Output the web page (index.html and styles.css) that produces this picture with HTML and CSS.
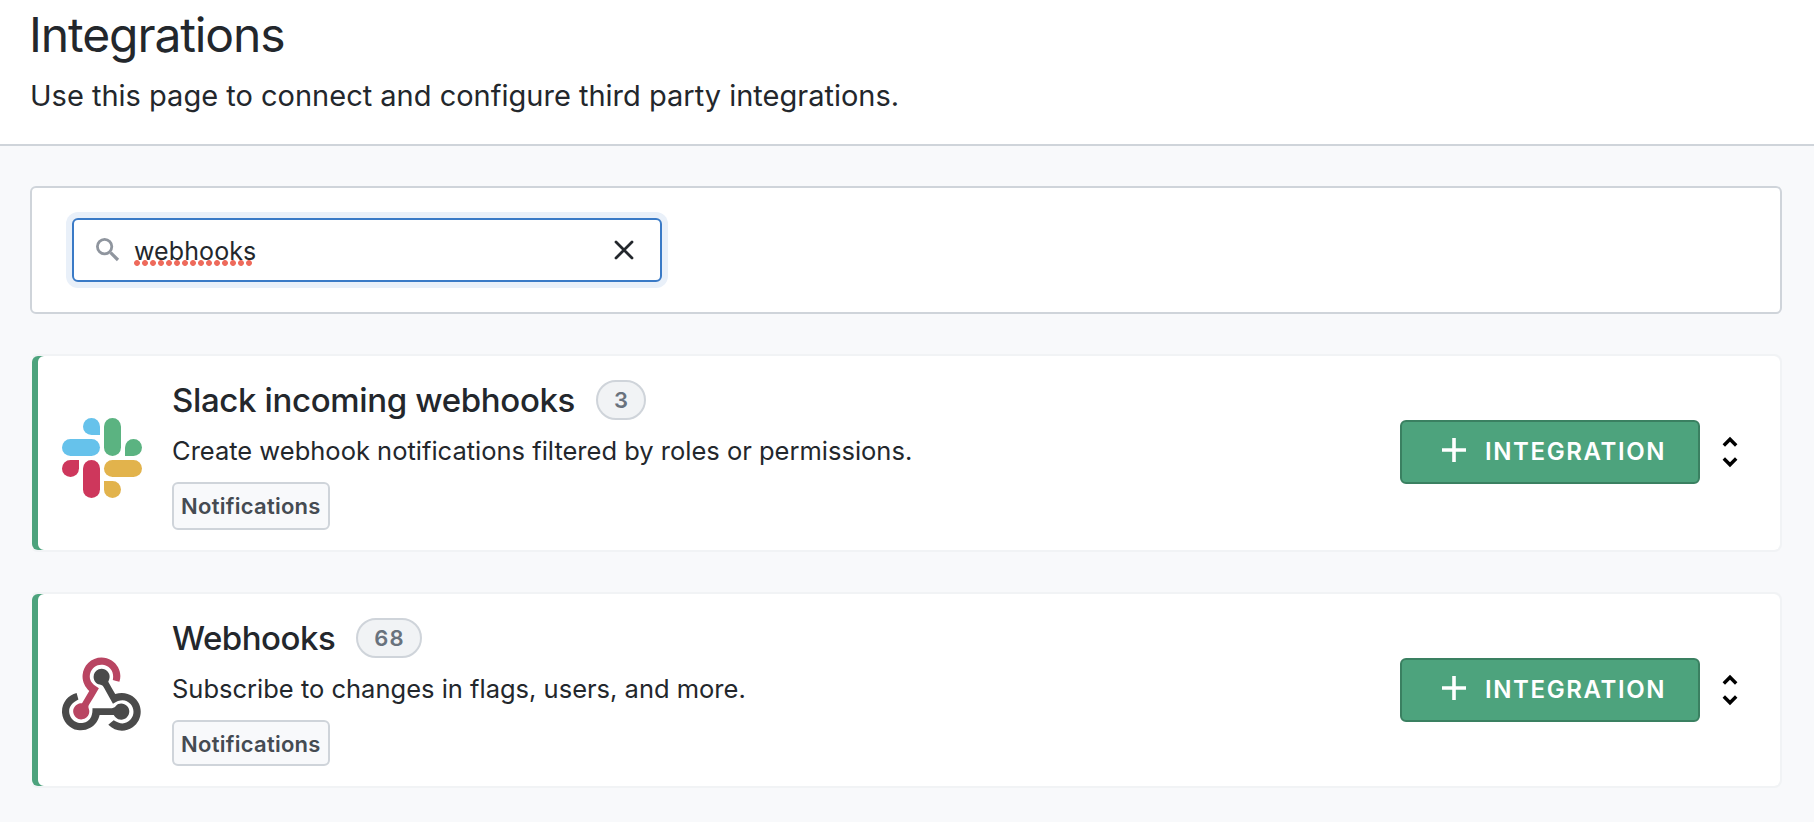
FILE: index.html
```
<!DOCTYPE html>
<html lang="en">
<head>
<meta charset="utf-8">
<title>Integrations</title>
<link rel="stylesheet" href="styles.css">
</head>
<body>
<header class="page-header">
  <h1 class="page-title">Integrations</h1>
  <p class="page-subtitle">Use this page to connect and configure third party integrations.</p>
</header>
<main class="content">
  <section class="filter-panel">
    <div class="search">
      <svg class="search-icon" viewBox="0 0 24 24" width="24" height="24"><circle cx="8.6" cy="8.6" r="7.2" fill="none" stroke="#8f959e" stroke-width="2.8"/><path d="M14.6 14.6L22 22" stroke="#8f959e" stroke-width="3.2"/></svg>
      <div class="search-text"><span class="misspelled">webhooks</span></div>
      <svg class="search-clear" viewBox="0 0 20 20" width="20" height="20"><path d="M2 2L18 18M18 2L2 18" stroke="#23272c" stroke-width="2.8" stroke-linecap="round"/></svg>
    </div>
  </section>

  <article class="card">
    <div class="card-body">
      <svg class="logo" viewBox="0 0 80 80" width="80" height="80">
        <g fill="#66c2eb"><path d="M38 17H29.5A8.5 8.5 0 1 1 38 8.5z"/><rect y="21" width="38" height="17" rx="8.5"/></g>
        <g fill="#5bb381"><rect x="42" width="17" height="38" rx="8.5"/><path d="M63 38V29.5A8.5 8.5 0 1 1 71.5 38z"/></g>
        <g fill="#ce375c"><path d="M17 42V50.5A8.5 8.5 0 1 1 8.5 42z"/><rect x="21" y="42" width="17" height="38" rx="8.5"/></g>
        <g fill="#e2b34c"><rect x="42" y="42" width="38" height="17" rx="8.5"/><path d="M42 63H50.5A8.5 8.5 0 1 1 42 71.5z"/></g>
      </svg>
      <div class="details">
        <div class="name-row"><h2 class="name">Slack incoming webhooks</h2><span class="count">3</span></div>
        <p class="description">Create webhook notifications filtered by roles or permissions.</p>
        <span class="tag">Notifications</span>
      </div>
      <div class="actions">
        <button class="add-button"><svg class="plus" viewBox="0 0 24 24" width="24" height="24"><path d="M12 0V24M0 12H24" stroke="#fff" stroke-width="3.6"/></svg>INTEGRATION</button>
        <svg class="toggle" viewBox="0 0 32 32" width="32" height="32"><path d="M9.8 9.5L16 3.2L22.2 9.5M9.8 22.5L16 28.8L22.2 22.5" fill="none" stroke="#000" stroke-width="3.4"/></svg>
      </div>
    </div>
  </article>

  <article class="card">
    <div class="card-body">
      <svg class="logo logo-webhooks" viewBox="0 0 256 239" width="79" height="74">
        <path fill="#b94562" d="M119.54 100.503c-10.61 17.836-20.775 35.108-31.152 52.25-2.665 4.401-3.984 7.986-1.855 13.58 5.878 15.454-2.414 30.493-17.998 34.575-14.697 3.851-29.016-5.808-31.932-21.543-2.584-13.927 8.224-27.58 23.58-29.757 1.286-.184 2.6-.205 4.762-.367l23.358-39.168C73.612 95.465 64.868 78.39 66.803 57.23c1.368-14.957 7.25-27.883 18-38.477 20.59-20.288 52.002-23.573 76.246-8.001 23.284 14.958 33.948 44.094 24.858 69.031-6.854-1.858-13.756-3.732-21.343-5.79 2.854-13.865.743-26.315-8.608-36.981-6.178-7.042-14.106-10.733-23.12-12.093-18.072-2.73-35.815 8.88-41.08 26.618-5.976 20.132 3.069 36.575 27.784 48.967z"/>
        <path fill="#4a4a4a" d="M149.841 79.41c7.475 13.187 15.065 26.573 22.587 39.836 38.02-11.763 66.686 9.284 76.97 31.817 12.422 27.219 3.93 59.457-20.465 76.25-25.04 17.238-56.707 14.293-78.892-7.851 5.654-4.733 11.336-9.487 17.407-14.566 21.912 14.192 41.077 13.524 55.305-3.282 12.133-14.337 11.87-35.714-.615-49.75-14.408-16.197-33.707-16.691-57.035-1.143-9.677-17.168-19.522-34.199-28.893-51.491-3.16-5.828-6.648-9.21-13.77-10.443-11.893-2.062-19.571-12.275-20.032-23.717-.453-11.316 6.214-21.545 16.634-25.53 10.322-3.949 22.435-.762 29.378 8.014 5.674 7.17 7.477 15.24 4.491 24.083-.83 2.466-1.905 4.852-3.07 7.774z"/>
        <path fill="#4a4a4a" d="M167.707 187.21h-45.77c-4.387 18.044-13.863 32.612-30.19 41.876-12.693 7.2-26.373 9.641-40.933 7.29-26.808-4.323-48.728-28.456-50.658-55.63-2.184-30.784 18.975-58.147 47.178-64.293 1.947 7.071 3.915 14.21 5.862 21.264-25.876 13.202-34.832 29.836-27.59 50.636 6.375 18.304 24.484 28.337 44.147 24.457 20.08-3.962 30.204-20.65 28.968-47.432 19.036 0 38.088-.197 57.126.097 7.434.117 13.173-.654 18.773-7.208 9.22-10.784 26.191-9.811 36.121.374 10.148 10.409 9.662 27.157-1.077 37.127-10.361 9.62-26.73 9.106-36.424-1.26-1.992-2.136-3.562-4.673-5.533-7.298z"/>
      </svg>
      <div class="details">
        <div class="name-row"><h2 class="name name-single">Webhooks</h2><span class="count">68</span></div>
        <p class="description">Subscribe to changes in flags, users, and more.</p>
        <span class="tag tag-short">Notifications</span>
      </div>
      <div class="actions">
        <button class="add-button"><svg class="plus" viewBox="0 0 24 24" width="24" height="24"><path d="M12 0V24M0 12H24" stroke="#fff" stroke-width="3.6"/></svg>INTEGRATION</button>
        <svg class="toggle" viewBox="0 0 32 32" width="32" height="32"><path d="M9.8 9.5L16 3.2L22.2 9.5M9.8 22.5L16 28.8L22.2 22.5" fill="none" stroke="#000" stroke-width="3.4"/></svg>
      </div>
    </div>
  </article>
</main>
</body>
</html>
```
FILE: styles.css
```
* { box-sizing: border-box; }

body {
  margin: 0;
  min-height: 822px;
  background: #f8f9fb;
  color: #23272c;
  font-family: Inter, "Liberation Sans", sans-serif;
}

h1, h2, p { margin: 0; font-weight: 400; }

.page-header {
  height: 146px;
  padding: 7px 30px 0;
  background: #fff;
  border-bottom: 2px solid #cfd4da;
}

.page-title {
  margin-left: -1px;
  font-size: 48px;
  line-height: 56px;
  letter-spacing: -1.1px;
}

.page-subtitle {
  margin-top: 13px;
  font-size: 29px;
  line-height: 40px;
}

.content {
  display: flex;
  flex-direction: column;
  gap: 40px;
  padding: 40px 32px 34px 30px;
}

.filter-panel {
  padding: 30px 40px;
  background: #fff;
  border: 2px solid #cfd4da;
  border-radius: 6px;
}

.search {
  display: flex;
  align-items: center;
  width: 590px;
  height: 64px;
  padding: 0 26px 0 22px;
  background: #fff;
  border: 2px solid #3a7ac6;
  border-radius: 6px;
  box-shadow: 0 0 0 6px #e9f0f9;
}

.search-text {
  flex: 1;
  margin-left: 14px;
  padding-top: 1px;
  font-size: 25px;
  line-height: 32px;
  letter-spacing: 0.1px;
}

.misspelled {
  display: inline-block;
  background-image: linear-gradient(to right, transparent 118px, #fff 118px), radial-gradient(circle at 3px 3px, #ee6a5b 2.5px, transparent 3.3px);
  background-position: 0 0, 0 25px;
  background-size: 100% 100%, 8px 6px;
  background-repeat: no-repeat, repeat-x;
}

.search-icon { margin-top: -1px; }

.card {
  background: #fff;
  background-clip: padding-box;
  border: 2px solid #f1f3f5;
  border-left-color: transparent;
  border-radius: 8px;
}

.card-body {
  display: flex;
  align-items: flex-start;
  padding: 24px 34px 20px 30px;
  box-shadow: inset 6px 0 0 #4da37d;
  border-radius: 6px;
}

.logo { flex: none; margin-top: 38px; }
.logo-webhooks { margin-top: 39px; margin-right: 1px; }

.details { flex: 1; margin-left: 30px; }

.name-row { display: flex; align-items: center; gap: 21px; }

.name {
  padding-top: 1px;
  font-size: 33px;
  font-weight: 500;
  line-height: 39px;
  letter-spacing: -0.35px;
}

.name-single { letter-spacing: -0.5px; }

.count {
  height: 40px;
  padding: 0 15px 0 16px;
  background: #f1f3f5;
  border: 2px solid #cfd4da;
  border-radius: 20px;
  color: #69727d;
  font-size: 22px;
  font-weight: 600;
  line-height: 37px;
  letter-spacing: 1.2px;
}

.description {
  margin: 16px 0;
  font-size: 25.5px;
  line-height: 30px;
}

.tag {
  display: block;
  width: 158px;
  height: 48px;
  padding-left: 7px;
  background: #f8f9fb;
  border: 2px solid #cfd4da;
  border-radius: 6px;
  color: #454b52;
  font-size: 22px;
  font-weight: 600;
  line-height: 44px;
  letter-spacing: 0.27px;
  white-space: nowrap;
}

.tag-short { height: 46px; }

.actions {
  display: flex;
  align-items: center;
  gap: 14px;
  margin-top: 40px;
}

.add-button {
  display: flex;
  align-items: center;
  gap: 19px;
  width: 300px;
  height: 64px;
  padding: 0 0 0 40px;
  background: #4da37d;
  border: 2px solid #3a8061;
  border-radius: 6px;
  color: #fff;
  font: 600 24px/30px Inter, "Liberation Sans", sans-serif;
  letter-spacing: 1.6px;
}

.plus { margin-bottom: 4px; }
```
